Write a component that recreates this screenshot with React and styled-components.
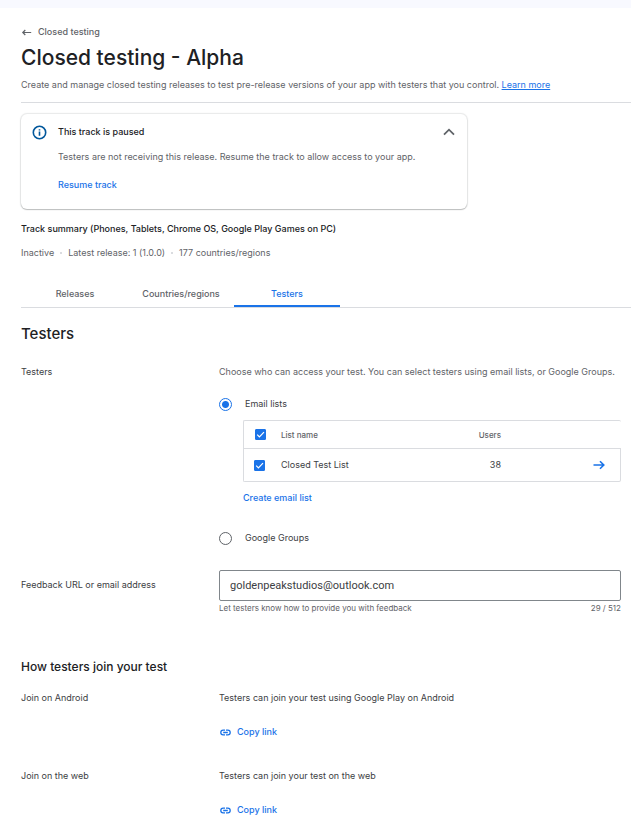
import React, { useState } from "react";
import styled, { createGlobalStyle } from "styled-components";

const GlobalStyle = createGlobalStyle`
  * {
    box-sizing: border-box;
  }

  body {
    margin: 0;
    background-color: #fff;
    color: #3c4043;
    font-family: Inter, Roboto, sans-serif;
    font-size: 9px;
    line-height: 16px;
  }

  button, input {
    font-family: inherit;
    color: inherit;
  }

  h1, h2, h3, p {
    margin: 0;
  }
`;

const TopBar = styled.div`
  height: 8px;
  background-color: #f8f9ff;
`;

const Page = styled.main`
  padding: 16px 0 5px 21px;
`;

const BackLink = styled.a`
  display: inline-flex;
  align-items: center;
  gap: 6px;
  color: #5f6368;
  font-weight: 500;
  text-decoration: none;
  vertical-align: top;
`;

const Title = styled.h1`
  margin-top: 4px;
  color: #202124;
  font-size: 21px;
  font-weight: 450;
  line-height: 28px;
`;

const Description = styled.p`
  margin-top: 5px;
  color: #5f6368;
`;

const TextLink = styled.a`
  color: #1a73e8;
  text-decoration: underline;
`;

const Divider = styled.hr`
  height: 1px;
  margin: 9px 0 0;
  border: none;
  background-color: #dadce0;
`;

const Notice = styled.section`
  display: flex;
  gap: 11px;
  max-width: 446px;
  margin-top: 11px;
  padding: 10px 12px 16px 11px;
  border-radius: 6px;
  box-shadow: 0 0 1px 1px rgba(60, 64, 67, 0.12), 0 1px 1px rgba(60, 64, 67, 0.26);
`;

const NoticeIcon = styled.svg`
  flex: none;
  width: 15px;
  height: 15px;
  margin-top: 1px;
`;

const NoticeBody = styled.div`
  flex: 1;
`;

const NoticeTitle = styled.h2`
  color: #202124;
  font-size: 9px;
  font-weight: 500;
`;

const NoticeText = styled.p`
  margin: 9px 0 12px;
  color: #5f6368;
`;

const IconButton = styled.button`
  display: flex;
  align-items: center;
  justify-content: center;
  width: 12px;
  height: 16px;
  padding: 0;
  border: none;
  background: none;
  cursor: pointer;
`;

const TextButton = styled.button`
  display: flex;
  align-items: center;
  gap: 6px;
  padding: 0;
  border: none;
  background: none;
  color: #1a73e8;
  font-size: 9px;
  font-weight: 500;
  line-height: 16px;
  cursor: pointer;
`;

const SummaryTitle = styled.h2`
  margin-top: 12px;
  color: #202124;
  font-size: 9px;
  font-weight: 500;
`;

const SummaryMeta = styled.div`
  display: flex;
  align-items: center;
  gap: 6px;
  margin-top: 8px;
  color: #5f6368;
`;

const Dot = styled.span`
  width: 2px;
  height: 2px;
  background-color: #dadce0;
`;

const Tabs = styled.div`
  display: flex;
  margin-top: 20px;
  padding-left: 1px;
  border-bottom: 1px solid #dadce0;
`;

const Tab = styled.button`
  width: 106px;
  height: 26px;
  padding: 0;
  border: none;
  border-bottom: 2px solid ${(props) => (props.$active ? "#1a73e8" : "transparent")};
  background: none;
  color: ${(props) => (props.$active ? "#1a73e8" : "#5f6368")};
  font-size: 9px;
  font-weight: 500;
  cursor: pointer;
`;

const SectionTitle = styled.h2`
  margin-top: 14px;
  color: #202124;
  font-size: 15px;
  font-weight: 450;
  line-height: 24px;
`;

const SubsectionTitle = styled.h3`
  margin: 43px 0 13px;
  color: #202124;
  font-size: 12px;
  font-weight: 450;
  line-height: 20px;
`;

const FormRow = styled.div`
  display: grid;
  grid-template-columns: 198px minmax(0, 1fr);
  margin-top: ${(props) => props.$space || 0}px;
  padding-right: 10px;
`;

const FieldLabel = styled.label`
  padding-top: ${(props) => (props.$boxed ? 7 : 0)}px;
`;

const Hint = styled.p`
  color: #5f6368;
`;

const RadioLabel = styled.label`
  display: flex;
  align-items: center;
  gap: 13px;
  margin-top: ${(props) => props.$space}px;
  cursor: pointer;
`;

const Radio = styled.input`
  appearance: none;
  width: 13px;
  height: 13px;
  margin: 0;
  border: 1px solid #5f6368;
  border-radius: 50%;
  cursor: pointer;

  &:checked {
    border-color: #1a73e8;
    background: radial-gradient(circle, #1a73e8 3px, transparent 4px);
  }
`;

const ListBlock = styled.div`
  padding: 8px 0 0 24px;
`;

const ListTable = styled.table`
  width: 100%;
  margin-bottom: 8px;
  border-collapse: separate;
  border-spacing: 0;
  table-layout: fixed;
  text-align: left;
`;

const HeadCell = styled.th`
  width: ${(props) => props.$width || "auto"};
  height: 28px;
  padding: 0;
  padding-left: ${(props) => props.$inset || 0}px;
  border-top: 1px solid #dadce0;
  color: #5f6368;
  font-size: 8px;
  font-weight: 500;
  text-align: ${(props) => props.$align || "left"};

  &:first-child {
    border-left: 1px solid #dadce0;
    border-top-left-radius: 2px;
  }

  &:last-child {
    border-top-right-radius: 2px;
  }
`;

const Cell = styled.td`
  height: 34px;
  padding: 0;
  padding-left: ${(props) => props.$inset || 0}px;
  border-top: 1px solid #dadce0;
  border-bottom: 1px solid #dadce0;
  text-align: ${(props) => props.$align || "left"};

  &:first-child {
    border-left: 1px solid #dadce0;
    border-bottom-left-radius: 2px;
  }

  &:last-child {
    border-right: 1px solid #dadce0;
    border-bottom-right-radius: 2px;
  }
`;

const CheckWrap = styled.span`
  position: relative;
  display: block;
  width: 11px;
  height: 11px;
`;

const CheckInput = styled.input`
  appearance: none;
  display: block;
  width: 11px;
  height: 11px;
  margin: 0;
  border: 1px solid #5f6368;
  border-radius: 1px;
  cursor: pointer;

  &:checked {
    border-color: #1a73e8;
    background-color: #1a73e8;
  }
`;

const CheckMark = styled.svg`
  position: absolute;
  inset: 0;
  pointer-events: none;
`;

const ArrowCell = styled(Cell)`
  ${IconButton} {
    margin-left: auto;
    margin-right: 15px;
  }
`;

const TextInput = styled.input`
  display: block;
  width: 100%;
  height: 31px;
  padding: 0 10px;
  border: 1px solid #80868b;
  border-radius: 2px;
  background-color: #fff;
  font-family: Roboto, sans-serif;
  font-size: 11px;
  outline: none;

  &:focus {
    border-color: #1a73e8;
  }
`;

const FieldFooter = styled.div`
  display: flex;
  justify-content: space-between;
  margin-top: 1px;
  color: #5f6368;
  font-size: 8px;
  line-height: 12px;
`;

const JoinAction = styled.div`
  padding: 18px 0 0 1px;
`;

function Checkbox({ label, checked, onChange }) {
  return (
    <CheckWrap>
      <CheckInput type="checkbox" aria-label={label} checked={checked} onChange={onChange} />
      {checked && (
        <CheckMark viewBox="0 0 11 11" fill="none" stroke="#fff" strokeWidth="1.2">
          <path d="M2.2 5.7L4.4 7.9L9 3.2" />
        </CheckMark>
      )}
    </CheckWrap>
  );
}

function LinkIcon() {
  return (
    <svg width="11" height="14" viewBox="0 0 11 14" fill="none" stroke="#1a73e8" strokeWidth="1.3">
      <path d="M5 5.2H3.1A2.3 2.3 0 0 0 3.1 9.8H5M6 5.2H7.9A2.3 2.3 0 0 1 7.9 9.8H6M3.2 7.5H7.8" />
    </svg>
  );
}

function JoinRow({ label, text, space }) {
  return (
    <FormRow $space={space}>
      <span>{label}</span>
      <div>
        <p>{text}</p>
        <JoinAction>
          <TextButton type="button">
            <LinkIcon />
            Copy link
          </TextButton>
        </JoinAction>
      </div>
    </FormRow>
  );
}

const tabs = ["Releases", "Countries/regions", "Testers"];

function App() {
  const [activeTab, setActiveTab] = useState("Testers");
  const [noticeOpen, setNoticeOpen] = useState(true);
  const [method, setMethod] = useState("email");
  const [listChecked, setListChecked] = useState(true);
  const [feedback, setFeedback] = useState("goldenpeakstudios@outlook.com");

  const toggleList = () => setListChecked(!listChecked);

  return (
    <>
      <GlobalStyle />
      <TopBar />
      <Page>
        <BackLink href="#">
          <svg width="11" height="10" viewBox="0 0 11 10" fill="none" stroke="#5f6368" strokeWidth="1.2">
            <path d="M10.2 5.5H1.8M4.3 3L1.8 5.5L4.3 8" />
          </svg>
          Closed testing
        </BackLink>
        <Title>Closed testing - Alpha</Title>
        <Description>
          Create and manage closed testing releases to test pre-release versions of your app with testers that you
          control. <TextLink href="#">Learn more</TextLink>
        </Description>
        <Divider />

        <Notice>
          <NoticeIcon viewBox="0 0 15 15" fill="none" stroke="#01579b">
            <circle cx="7.5" cy="7.5" r="6.2" strokeWidth="1.6" />
            <path d="M7.5 6.6V10.8M7.5 4.2V5.6" strokeWidth="1.6" />
          </NoticeIcon>
          <NoticeBody>
            <NoticeTitle>This track is paused</NoticeTitle>
            {noticeOpen && (
              <>
                <NoticeText>
                  Testers are not receiving this release. Resume the track to allow access to your app.
                </NoticeText>
                <TextButton type="button">Resume track</TextButton>
              </>
            )}
          </NoticeBody>
          <IconButton type="button" aria-label="Toggle details" onClick={() => setNoticeOpen(!noticeOpen)}>
            <svg width="12" height="8" viewBox="0 0 12 8" fill="none" stroke="#5f6368" strokeWidth="1.8">
              <path d="M1 6.7L6 1.7L11 6.7" />
            </svg>
          </IconButton>
        </Notice>

        <SummaryTitle>Track summary (Phones, Tablets, Chrome OS, Google Play Games on PC)</SummaryTitle>
        <SummaryMeta>
          <span>Inactive</span>
          <Dot />
          <span>Latest release: 1 (1.0.0)</span>
          <Dot />
          <span>177 countries/regions</span>
        </SummaryMeta>

        <Tabs role="tablist">
          {tabs.map((tab) => (
            <Tab
              key={tab}
              type="button"
              role="tab"
              aria-selected={activeTab === tab}
              $active={activeTab === tab}
              onClick={() => setActiveTab(tab)}
            >
              {tab}
            </Tab>
          ))}
        </Tabs>

        <SectionTitle>Testers</SectionTitle>
        <FormRow $space={18}>
          <span>Testers</span>
          <div>
            <Hint>Choose who can access your test. You can select testers using email lists, or Google Groups.</Hint>
            <RadioLabel $space={16}>
              <Radio type="radio" name="method" checked={method === "email"} onChange={() => setMethod("email")} />
              Email lists
            </RadioLabel>
            <ListBlock>
              <ListTable>
                <thead>
                  <tr>
                    <HeadCell $width="38px" $inset={11}>
                      <Checkbox label="Select all lists" checked={listChecked} onChange={toggleList} />
                    </HeadCell>
                    <HeadCell>List name</HeadCell>
                    <HeadCell $width="60px" $align="right">
                      Users
                    </HeadCell>
                    <HeadCell $width="120px" />
                  </tr>
                </thead>
                <tbody>
                  <tr>
                    <Cell $inset={10}>
                      <Checkbox label="Closed Test List" checked={listChecked} onChange={toggleList} />
                    </Cell>
                    <Cell>Closed Test List</Cell>
                    <Cell $align="right">38</Cell>
                    <ArrowCell>
                      <IconButton type="button" aria-label="Open list">
                        <svg width="12" height="10" viewBox="0 0 12 10" fill="none" stroke="#1a73e8" strokeWidth="1.6">
                          <path d="M0.5 5H10.5M7 1.2L10.8 5L7 8.8" />
                        </svg>
                      </IconButton>
                    </ArrowCell>
                  </tr>
                </tbody>
              </ListTable>
              <TextButton type="button">Create email list</TextButton>
            </ListBlock>
            <RadioLabel $space={24}>
              <Radio type="radio" name="method" checked={method === "groups"} onChange={() => setMethod("groups")} />
              Google Groups
            </RadioLabel>
          </div>
        </FormRow>

        <FormRow $space={24}>
          <FieldLabel htmlFor="feedback" $boxed>
            Feedback URL or email address
          </FieldLabel>
          <div>
            <TextInput
              id="feedback"
              type="text"
              maxLength={512}
              value={feedback}
              onChange={(e) => setFeedback(e.target.value)}
            />
            <FieldFooter>
              <span>Let testers know how to provide you with feedback</span>
              <span>{feedback.length} / 512</span>
            </FieldFooter>
          </div>
        </FormRow>

        <SubsectionTitle>How testers join your test</SubsectionTitle>
        <JoinRow label="Join on Android" text="Testers can join your test using Google Play on Android" />
        <JoinRow label="Join on the web" text="Testers can join your test on the web" space={28} />
      </Page>
    </>
  );
}

export default App;
